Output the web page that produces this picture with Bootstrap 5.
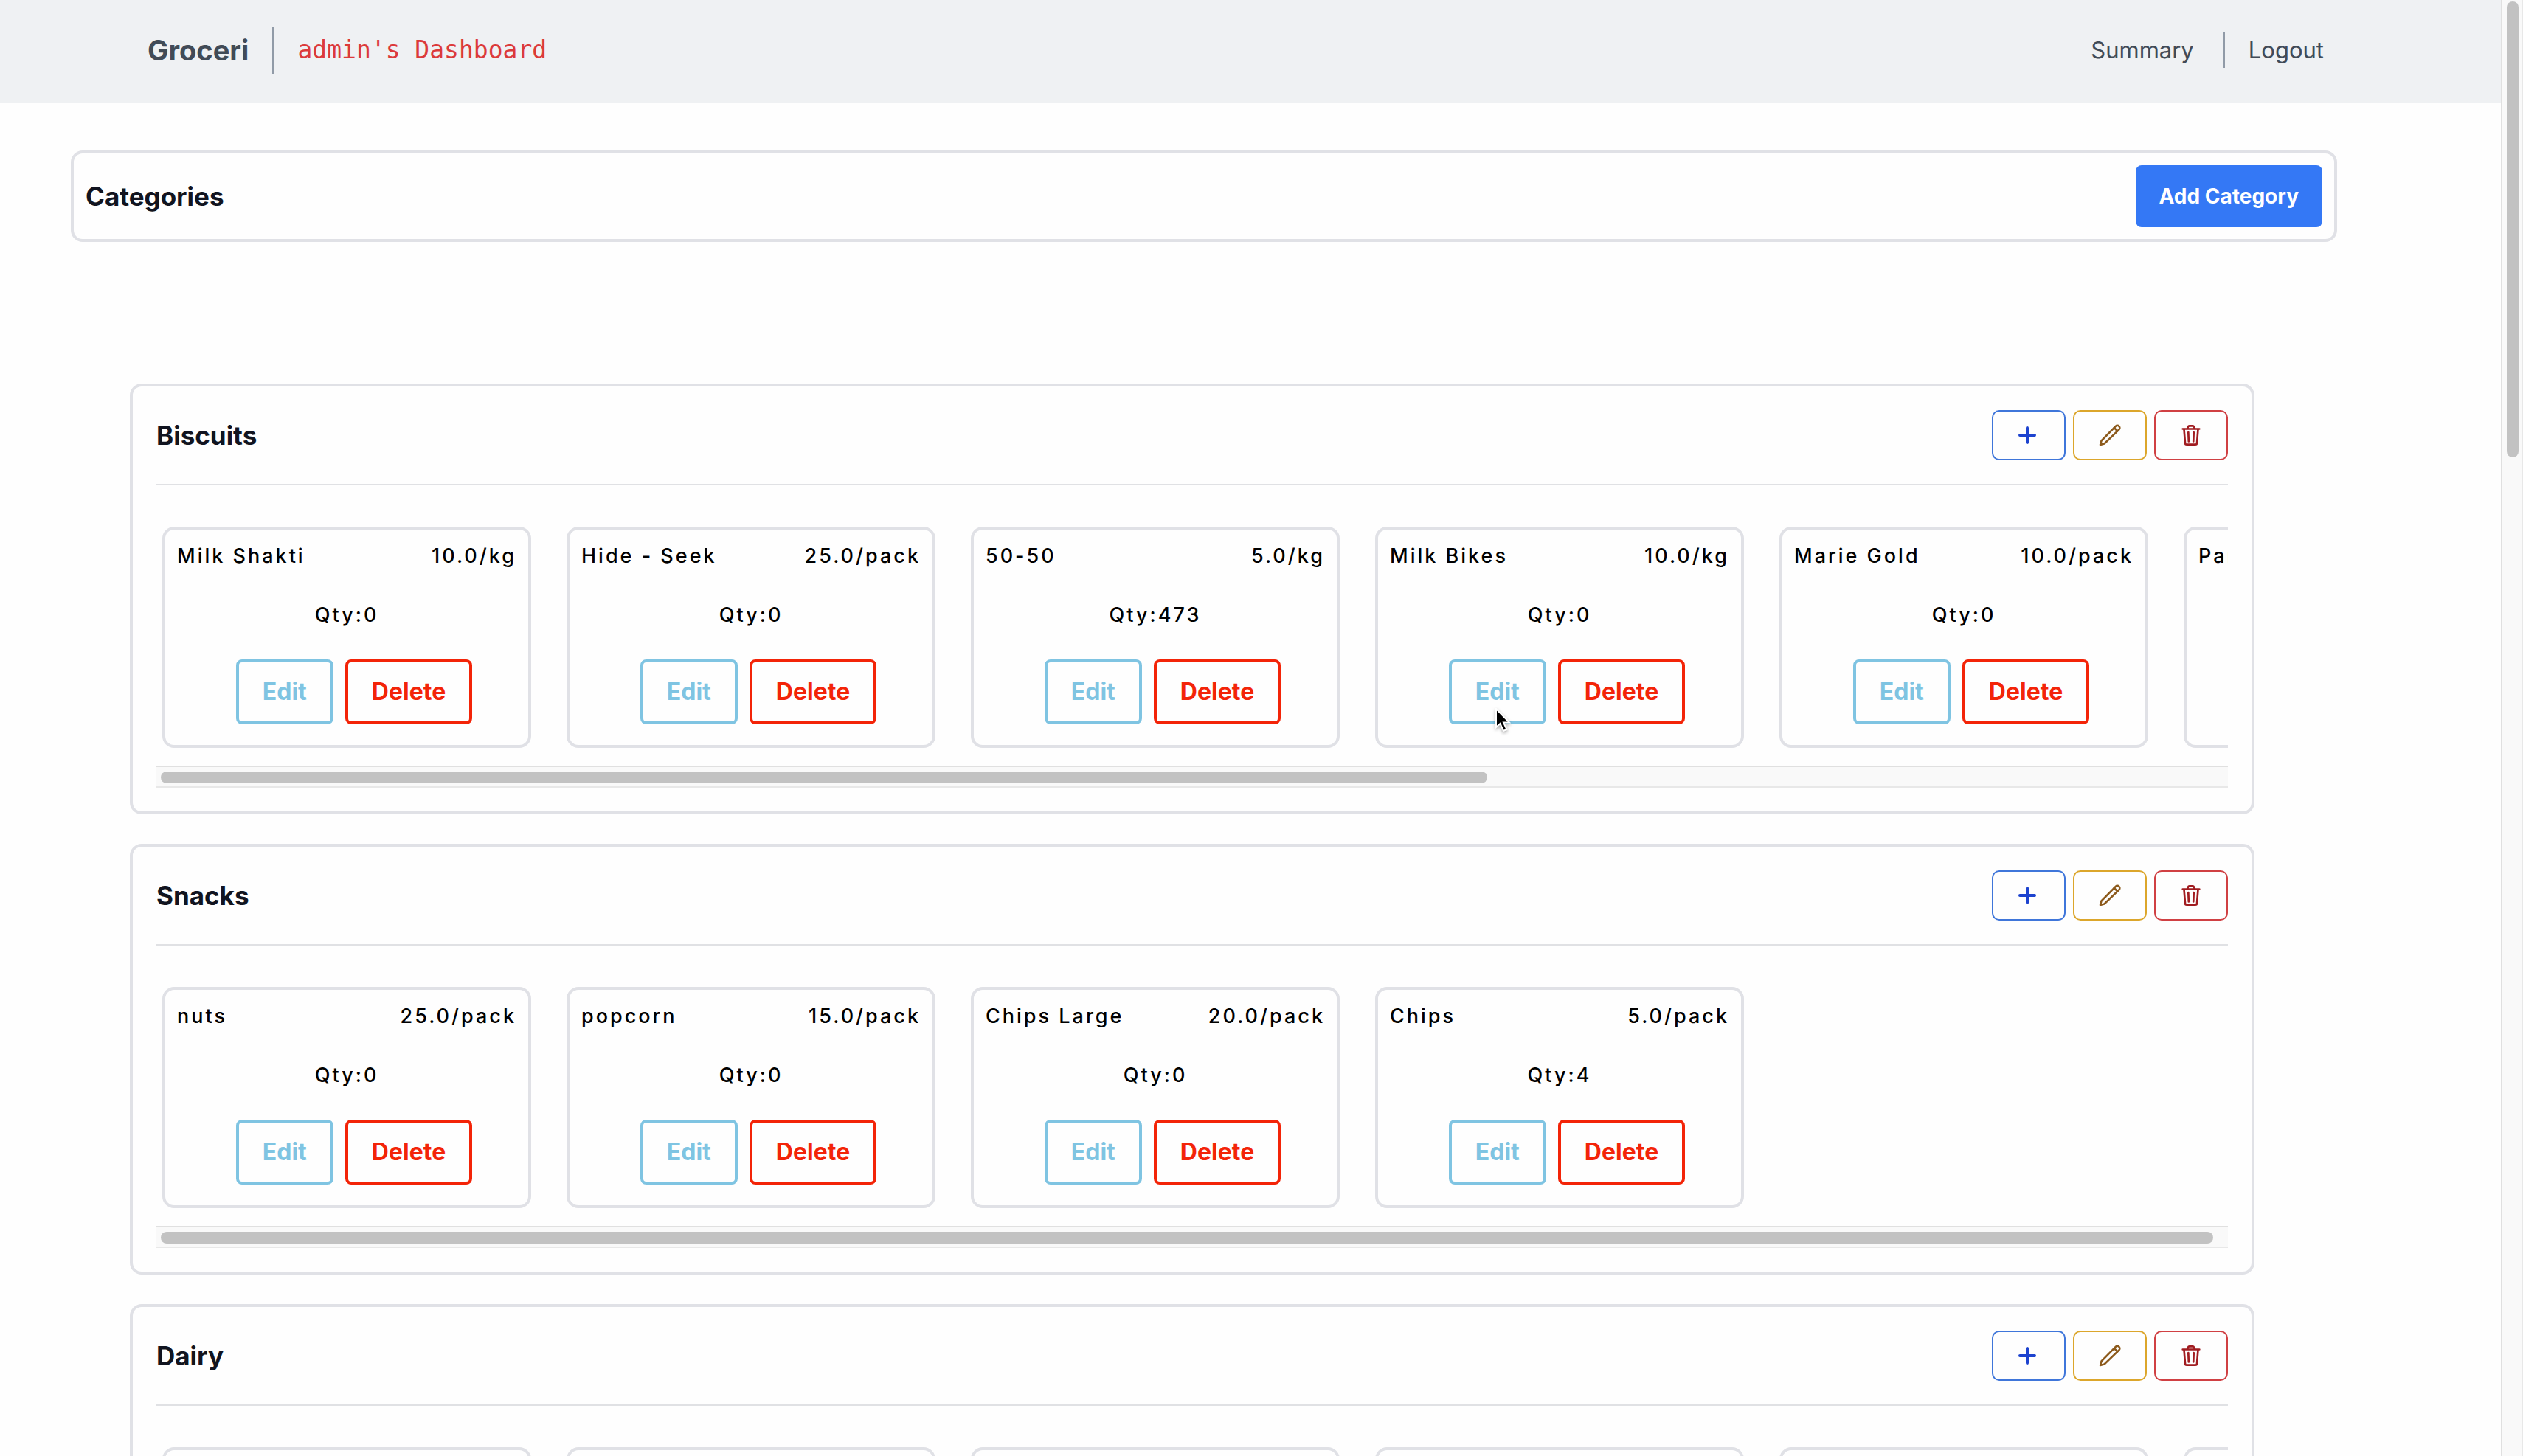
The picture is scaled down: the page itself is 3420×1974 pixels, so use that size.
<!DOCTYPE html>
<html lang="en">
<head>
<meta charset="utf-8">
<meta name="viewport" content="width=device-width, initial-scale=1">
<title>Groceri</title>
<link rel="stylesheet" href="https://cdn.jsdelivr.net/npm/bootstrap@5.3.0/dist/css/bootstrap.min.css">
<style>
  body { font-family: Inter, "Liberation Sans", sans-serif; background: #fefefe; color: #111420; }
  .top-nav { height: 140px; background: #eff1f3; padding: 0 240px 4px 200px; color: #414b57; }
  .top-nav a { color: inherit; text-decoration: none; font-size: 31px; line-height: 48px; }
  .top-nav a.brand { font-size: 38px; font-weight: 700; }
  .nav-rule { width: 2px; height: 48px; margin: 0 32px 0 40px; background: #919ba7; }
  .nav-rule-tall { height: 64px; margin-left: 32px; }
  .dash-title { font-family: "DejaVu Sans Mono", "Liberation Mono", monospace; font-size: 33px; line-height: 48px; color: #dc3a3a; }
  .outline-box { border: 4px solid #e0e1e6; border-radius: 16px; }
  .cat-bar { margin: 64px 222px 0 96px; padding: 16px; }
  h1, h2 { font-size: 35px; line-height: 56px; font-weight: 700; margin: 0; }
  .btn-add { height: 84px; padding: 0 32px; border: 0; border-radius: 8px; background: #3478f5; color: #fff; font-size: 28px; font-weight: 700; }
  .sections { margin: 192px 334px 0 176px; gap: 40px; }
  .cat-box { padding: 32px; }
  .cat-head { padding-bottom: 32px; border-bottom: 2px solid #e0e1e4; }
  .tools { gap: 10px; }
  .btn-tool { width: 100px; height: 68px; padding: 0; border: 2px solid; border-radius: 10px; background: transparent; }
  .btn-tool svg { width: 32px; height: 32px; }
  .tool-add { border-color: #3f76da; color: #1d43cf; }
  .tool-add svg { margin-right: 4px; }
  .tool-edit { border-color: #dca62b; color: #8c5a1c; }
  .tool-del { border-color: #d04043; color: #a01c20; }
  .items { padding: 56px 8px 24px; gap: 48px; overflow: hidden; }
  .item { flex: 0 0 500px; height: 300px; padding: 16px; gap: 40px; color: #000; font-size: 27px; line-height: 40px; font-weight: 500; letter-spacing: 3px; }
  .item-actions { gap: 16px; padding-left: 20px; letter-spacing: normal; }
  .btn-item { height: 88px; padding: 0 32px; border: 4px solid; border-radius: 8px; background: transparent; font-size: 32px; font-weight: 700; }
  .item-edit { border-color: #7fc4e2; color: #7fc4e2; }
  .item-del { border-color: #f32408; color: #f32408; }
  .rail { height: 30px; padding: 6px; border-top: 2px solid #e0e0e0; border-bottom: 2px solid #e8e8e8; background: #f9f9f9; }
  .rail-thumb { height: 16px; border-radius: 8px; background: #c2c2c2; }
  .page-rail { flex: 0 0 30px; padding: 2px 4px 0 6px; border-left: 2px solid #e0e0e0; border-right: 2px solid #e8e8e8; background: #f9f9f9; }
  .page-thumb { height: 618px; border-radius: 8px; background: #c2c2c2; }
  .pointer { left: 62px; top: 66px; width: 24px; height: 36px; pointer-events: none; filter: drop-shadow(0 2px 2px rgba(0, 0, 0, .35)); }
</style>
<script src="https://cdn.jsdelivr.net/npm/bootstrap@5.3.0/dist/js/bootstrap.bundle.min.js"></script>
</head>
<body>
<svg class="d-none" xmlns="http://www.w3.org/2000/svg">
  <symbol id="i-plus" viewBox="0 0 32 32"><path d="M16 6v20M6 16h20" fill="none" stroke="currentColor" stroke-width="4" stroke-linecap="round"/></symbol>
  <symbol id="i-pencil" viewBox="0 0 32 32"><g fill="none" stroke="currentColor" stroke-width="2.6" stroke-linejoin="round" stroke-linecap="round"><path d="M3 29l1.500-5.500L23.800 3.800a3.200 3.200 0 0 1 4.600 4.600L8.500 27.500z"/><path d="M21.800 6l4.400 4.400"/></g></symbol>
  <symbol id="i-trash" viewBox="0 0 32 32"><g fill="none" stroke="currentColor" stroke-width="2.700" stroke-linejoin="round" stroke-linecap="round"><path d="M4.700 7.500h22.600M6.500 8l1.500 18.500a2.200 2.200 0 0 0 2.200 2.200h11.600a2.200 2.200 0 0 0 2.200-2.200L25.500 8M11 7l1-2.500a2 2 0 0 1 2-1.200h4a2 2 0 0 1 2 1.200L21 7M12.300 12l.5 12.500M19.700 12l-.5 12.500"/></g></symbol>
</svg>
<div class="d-flex vh-100 overflow-hidden">
  <div class="flex-grow-1 overflow-hidden">
    <nav class="top-nav d-flex align-items-center justify-content-between">
      <div class="d-flex align-items-center">
        <a class="brand" href="#">Groceri</a>
        <span class="nav-rule nav-rule-tall"></span>
        <span class="dash-title">admin's Dashboard</span>
      </div>
      <div class="d-flex align-items-center">
        <a href="#">Summary</a>
        <span class="nav-rule"></span>
        <a href="#">Logout</a>
      </div>
    </nav>
    <header class="cat-bar outline-box d-flex align-items-center justify-content-between">
      <h1>Categories</h1>
      <button class="btn-add" type="button">Add Category</button>
    </header>
    <main class="sections d-flex flex-column" id="sections"></main>
  </div>
  <div class="page-rail"><div class="page-thumb"></div></div>
</div>
<script>
  const categories = [
    { name: 'Biscuits', thumb: 64.3, items: [['Milk Shakti', '10.0/kg', 0], ['Hide - Seek', '25.0/pack', 0], ['50-50', '5.0/kg', 473], ['Milk Bikes', '10.0/kg', 0, true], ['Marie Gold', '10.0/pack', 0], ['Par']] },
    { name: 'Snacks', thumb: 99.5, items: [['nuts', '25.0/pack', 0], ['popcorn', '15.0/pack', 0], ['Chips Large', '20.0/pack', 0], ['Chips', '5.0/pack', 4]] },
    { name: 'Dairy', thumb: 64.3, items: [[], [], [], [], [], []] }
  ];
  const tool = (cls, icon, label) => `<button type="button" class="btn-tool ${cls} d-flex align-items-center justify-content-center" aria-label="${label}"><svg aria-hidden="true"><use href="#${icon}"/></svg></button>`;
  const pointer = `<svg class="pointer position-absolute" viewBox="0 0 24 36" aria-hidden="true"><path d="M2 1v25l5.500-5 4.500 10 4.500-2-4.500-9.500h8z" fill="#000" stroke="#fff" stroke-width="2"/></svg>`;
  const details = (qty, hovered) => `
      <div class="text-center">Qty:${qty}</div>
      <div class="item-actions d-flex justify-content-center">
        <div class="position-relative"><button type="button" class="btn-item item-edit">Edit</button>${hovered ? pointer : ''}</div>
        <button type="button" class="btn-item item-del">Delete</button>
      </div>`;
  const item = ([name = '', price = '', qty, hovered]) => `
    <article class="item outline-box d-flex flex-column">
      <div class="d-flex justify-content-between"><span>${name}</span><span>${price}</span></div>
      ${qty === undefined ? '' : details(qty, hovered)}
    </article>`;
  document.getElementById('sections').innerHTML = categories.map(c => `
    <section class="cat-box outline-box">
      <div class="cat-head d-flex align-items-center justify-content-between">
        <h2>${c.name}</h2>
        <div class="tools d-flex">${tool('tool-add', 'i-plus', 'Add item')}${tool('tool-edit', 'i-pencil', 'Edit category')}${tool('tool-del', 'i-trash', 'Delete category')}</div>
      </div>
      <div class="items d-flex">${c.items.map(item).join('')}</div>
      <div class="rail"><div class="rail-thumb" style="width:${c.thumb}%"></div></div>
    </section>`).join('');
</script>
</body>
</html>
